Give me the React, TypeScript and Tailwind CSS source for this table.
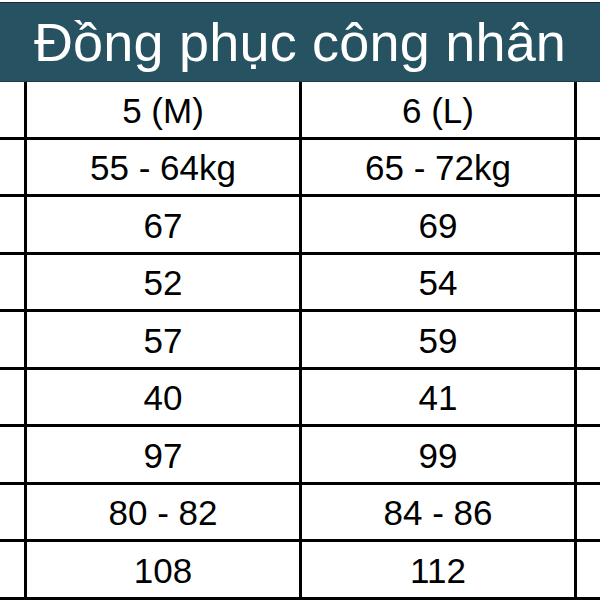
import React from "react";

const rows: [string, string][] = [
  ["5 (M)", "6 (L)"],
  ["55 - 64kg", "65 - 72kg"],
  ["67", "69"],
  ["52", "54"],
  ["57", "59"],
  ["40", "41"],
  ["97", "99"],
  ["80 - 82", "84 - 86"],
  ["108", "112"],
];

function App() {
  return (
    <div
      className="w-[600px] h-[600px] overflow-hidden bg-white text-black"
      style={{ fontFamily: '"Liberation Sans", Arial, sans-serif' }}
    >
      <div className="h-[2px] bg-white" />
      <div className="h-[1px] bg-[#1a2a30]" />
      <div className="h-[79px] bg-[#265261] border-b border-[#1d3f4a] flex items-center justify-center">
        <h1 className="text-[54px] leading-none text-white tracking-[0.2px]">
          Đồng phục công nhân
        </h1>
      </div>
      <div className="grid grid-cols-[27px_275px_275px_23px]">
        {rows.map(([m, l], i) => (
          <React.Fragment key={i}>
            <div className="h-[57.5px] border-r-[3px] border-b-[3px] border-black" />
            <div className="h-[57.5px] border-r-[3px] border-b-[3px] border-black flex items-center justify-center text-[35px] leading-none pt-[2px]">
              {m}
            </div>
            <div className="h-[57.5px] border-r-[3px] border-b-[3px] border-black flex items-center justify-center text-[35px] leading-none pt-[2px]">
              {l}
            </div>
            <div className="h-[57.5px] border-b-[3px] border-black" />
          </React.Fragment>
        ))}
      </div>
    </div>
  );
}

export default App;
